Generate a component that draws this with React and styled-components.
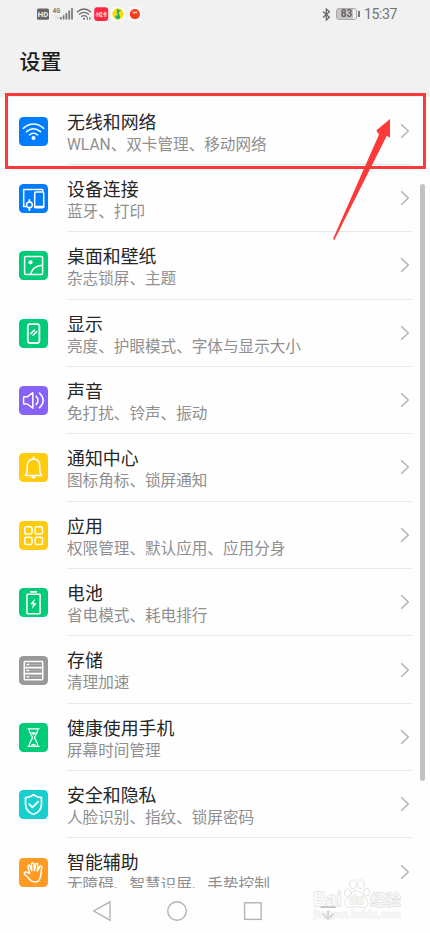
import React from "react";
import styled, { createGlobalStyle } from "styled-components";

const rows = [
  { icon: "wifi", bg: "#007dff", title: "无线和网络", sub: "WLAN、双卡管理、移动网络" },
  { icon: "devices", bg: "#007dff", title: "设备连接", sub: "蓝牙、打印" },
  { icon: "wallpaper", bg: "#00cb78", title: "桌面和壁纸", sub: "杂志锁屏、主题" },
  { icon: "display", bg: "#00cb78", title: "显示", sub: "亮度、护眼模式、字体与显示大小" },
  { icon: "sound", bg: "#8662f6", title: "声音", sub: "免打扰、铃声、振动" },
  { icon: "bell", bg: "#ffcb0d", title: "通知中心", sub: "图标角标、锁屏通知" },
  { icon: "apps", bg: "#ffcb0d", title: "应用", sub: "权限管理、默认应用、应用分身" },
  { icon: "battery", bg: "#00cb78", title: "电池", sub: "省电模式、耗电排行" },
  { icon: "storage", bg: "#999999", title: "存储", sub: "清理加速" },
  { icon: "hourglass", bg: "#00cb78", title: "健康使用手机", sub: "屏幕时间管理" },
  { icon: "shield", bg: "#17cfcf", title: "安全和隐私", sub: "人脸识别、指纹、锁屏密码" },
  { icon: "hand", bg: "#ff9a22", title: "智能辅助", sub: "无障碍、智慧识屏、手势控制" }
];

// All glyphs share the 29x29 tile as their coordinate system
const glyphs = {
  wifi: (
    <>
      <path d="M4.3 11.3Q14.5 2.8 24.7 11.3M7.5 14.7Q14.5 8.9 21.5 14.7M10.5 17.9Q14.5 14.6 18.5 17.9" />
      <circle cx="14.5" cy="21" r="2" fill="#fff" stroke="none" />
    </>
  ),
  devices: (
    <>
      <path d="M7 22.5H4.7V5.4H23.7V7.5" />
      <rect x="15.7" y="8.1" width="9" height="15.6" rx="1" />
      <path d="M16 22.9H24.4" strokeWidth="2.2" />
      <circle cx="10.4" cy="20.8" r="2.9" />
      <path d="M10.4 15.8V17.8M10.4 23.8V26" strokeWidth="1.8" />
    </>
  ),
  wallpaper: (
    <>
      <rect x="5.6" y="5.6" width="18" height="18" rx="1.3" />
      <circle cx="11.5" cy="11.3" r="2.1" fill="#fff" stroke="none" />
      <path d="M11.8 23.4C12.3 18 17.4 14.4 23.4 14.3" />
    </>
  ),
  display: (
    <>
      <rect x="8.8" y="5.2" width="11.6" height="18.8" rx="2.2" strokeWidth="1.8" />
      <path d="M11.7 14.7L15.4 11.1M14 16.2L17.7 12.6" />
    </>
  ),
  sound: (
    <>
      <path d="M4.6 11.4Q4.6 10.8 5.2 10.8H8.3L13.8 6.6V22.2L8.3 18H5.2Q4.6 18 4.6 17.4Z" />
      <path d="M17.2 10.2Q20.8 14.4 17.2 18.6M20.4 7Q28 14.4 20.4 21.8" />
    </>
  ),
  bell: (
    <>
      <path d="M6.3 22.5C8.4 20.8 8.2 17.5 8.2 13.4C8.2 8.8 10.7 6.1 14.5 6.1S20.8 8.8 20.8 13.4C20.8 17.5 20.6 20.8 22.7 22.5Z" />
      <path d="M14.5 4.4V6M13.2 24.2H15.8" strokeWidth="2" />
    </>
  ),
  apps: (
    <>
      <rect x="5.7" y="5.8" width="7.3" height="7.3" rx="1.6" />
      <rect x="16.2" y="5.8" width="7.3" height="7.3" rx="1.6" />
      <rect x="5.7" y="16.3" width="7.3" height="7.3" rx="1.6" />
      <rect x="16.2" y="16.3" width="7.3" height="7.3" rx="1.6" />
    </>
  ),
  battery: (
    <>
      <path d="M11.8 3.8H17.2" strokeWidth="1.8" />
      <rect x="7.9" y="6.2" width="13.2" height="19.6" rx="0.7" />
      <path d="M15.9 10.8L11.2 16.3H14L13 21L17.7 15.3H14.9Z" fill="#fff" stroke="none" />
    </>
  ),
  storage: (
    <>
      <rect x="5.3" y="5.5" width="18.4" height="18.2" rx="0.6" />
      <path d="M5.5 11.6H23.5M5.5 17.6H23.5" strokeWidth="1.8" />
      <path d="M8 8.5H9.6M8 14.6H9.6M8 20.7H9.6" strokeWidth="1.5" />
      <path d="M11.2 8.5H21.8M11.2 14.6H21.8M11.2 20.7H21.8" strokeWidth="0.4" opacity="0.6" />
    </>
  ),
  hourglass: (
    <>
      <path
        d="M9 5.8H20M9 23.4H20M10.2 5.8C10 11 13.4 12 13.4 14.6C13.4 17.2 10 18.2 10.2 23.4M18.8 5.8C19 11 15.6 12 15.6 14.6C15.6 17.2 19 18.2 18.8 23.4"
        strokeWidth="1.3"
      />
      <path d="M11.6 9.2H17.4L14.5 12.2ZM11.3 22.5Q14.5 19 17.7 22.5Z" fill="#fff" stroke="none" />
    </>
  ),
  shield: (
    <>
      <path d="M14.5 4.6Q17.7 7.5 22.5 7.6V14C22.5 19.5 19 22.8 14.5 24.5C10 22.8 6.5 19.5 6.5 14V7.6Q11.3 7.5 14.5 4.6Z" strokeWidth="1.7" />
      <path d="M10.3 14.2L13.4 17.3L19.2 11.6" strokeWidth="1.8" />
    </>
  ),
  hand: (
    <path
      d="M10.7 15.2L9 9.1C8.5 7.1 10.6 6.5 11.2 8.3L12.8 12.8L12.4 6.7C12.3 4.6 14.7 4.4 15 6.4L15.5 12.5L16.5 6.8C17 4.9 19.1 5.3 18.8 7.3L18.2 13L20.6 8.9C21.5 7.2 23.5 8.1 22.8 9.9C21.6 13.5 22.8 18 20.1 22.1Q18.8 24 16.4 24C12.5 24 10.8 22.3 8.8 19.4L5.7 16.3C4.4 14.6 6.3 13.2 8 14.2Z"
    />
  )
};

const Index = () => (
  <>
    <GlobalStyle />
    <Screen>
      <StatusBar>
        <StatusGroup>
          <StatusLeft />
        </StatusGroup>
        <StatusGroup>
          <Bluetooth width="9" height="13" viewBox="0 0 9 13">
            <path d="M1 3.5L7.4 9.2L4.3 12V1L7.4 3.8L1 9.5" />
          </Bluetooth>
          <BatteryBody>83</BatteryBody>
          <BatteryCap />
          <Clock>15:37</Clock>
        </StatusGroup>
      </StatusBar>
      <Header>设置</Header>
      <List>
        {rows.map(row => (
          <Row key={row.icon}>
            <Tile $bg={row.bg}>
              <Glyph viewBox="0 0 29 29">{glyphs[row.icon]}</Glyph>
            </Tile>
            <RowBody>
              <Texts>
                <Title>{row.title}</Title>
                <Sub>{row.sub}</Sub>
              </Texts>
              <Chevron viewBox="0 0 10 16">
                <path d="M1.2 1.2L8.2 8L1.2 14.8" />
              </Chevron>
            </RowBody>
          </Row>
        ))}
      </List>
      <NavBar>
        <NavIcon viewBox="0 0 22 22">
          <path d="M19 1.8V20.2L2.8 11Z" />
        </NavIcon>
        <NavIcon viewBox="0 0 22 22">
          <circle cx="11" cy="11" r="9.3" />
        </NavIcon>
        <NavIcon viewBox="0 0 22 22">
          <rect x="2.6" y="2.8" width="16.6" height="16.6" />
        </NavIcon>
        <NavIcon viewBox="0 0 22 22">
          <path d="M3.2 7H19M11.1 10.8V19M5.4 13.6L11.1 19L16.8 13.6" />
        </NavIcon>
      </NavBar>
      <ScrollThumb />
      <Highlight />
      <Pointer viewBox="0 0 60 124">
        <path d="M1 121L47 16.5L44.3 12.5L58 1V19.8L54.8 17.8L2.4 122Z" fill="#fc3a3a" />
      </Pointer>
      <Watermark />
    </Screen>
  </>
);

const StatusLeft = () => (
  <svg width="108" height="16" viewBox="0 0 108 16">
    <rect x="1" y="2.4" width="12" height="11.4" rx="1.5" fill="#666" />
    <text x="7" y="11" fontSize="7.6" fontWeight="700" textAnchor="middle" fill="#f1f1f1">HD</text>
    <text x="16.8" y="7" fontSize="7" fontWeight="700" fill="#777" textLength="7.4" lengthAdjust="spacingAndGlyphs">4G</text>
    <text x="17.4" y="13.4" fontSize="4.8" fill="#cfcfcf">1G</text>
    <path d="M24.8 11V13.6M27.6 9.2V13.6M30.4 7V13.6M33.2 4.6V13.6M36 2V13.6" stroke="#777" strokeWidth="1.7" />
    <g fill="none" stroke="#6d6d6d" strokeWidth="1.35">
      <path d="M41 6.2Q48 -0.2 55 6.2M43.1 8.6Q48 4.1 53 8.6M45.2 10.8Q48 8.4 50.8 10.8" />
    </g>
    <circle cx="48" cy="12.8" r="1" fill="#6d6d6d" />
    <path d="M50.3 12.4L52 10.6V14.2ZM55.2 12.4L53.4 10.6V14.2Z" fill="#777" />
    <rect x="58.2" y="1.2" width="14" height="13.8" rx="3" fill="#ff2745" />
    <text x="65.2" y="10" fontSize="4.4" fontWeight="700" textAnchor="middle" fill="#fff" textLength="11" lengthAdjust="spacingAndGlyphs">小红书</text>
    <rect x="75.2" y="1.2" width="13.6" height="13.8" rx="3" fill="#fbfbfb" />
    <circle cx="82" cy="8" r="5.7" fill="#ffdc08" />
    <path d="M81 2.7Q83 4.4 85.4 4.6L82.6 6.2L84.2 10.9Q83.9 13.4 81.3 13.2Q79 12.6 79.3 10.6Q80 8.7 82.1 9.4L80.6 5.9Z" fill="#12b573" />
    <rect x="92" y="1.2" width="13.6" height="13.8" rx="3" fill="#fbfbfb" />
    <circle cx="98.9" cy="8.2" r="5.1" fill="#f4411d" />
    <path d="M96.8 5.4L98.2 7.4L99 5.8L100.2 7.2L101 5.4" stroke="#ffd8c8" fill="none" />
  </svg>
);

const Watermark = () => (
  <Mark viewBox="0 0 94 48">
    <g fill="#fff" fillOpacity="0.8" stroke="#dfdfdf" strokeWidth="0.9">
      <ellipse cx="36.6" cy="16.7" rx="3.2" ry="3.8" />
      <ellipse cx="41.9" cy="8.2" rx="3.3" ry="4.3" />
      <ellipse cx="49.9" cy="8.2" rx="3.3" ry="4.3" />
      <ellipse cx="55.6" cy="16.2" rx="3.2" ry="3.8" />
      <path d="M45 14.6C40.5 14.6 40 19 36.5 21.6C31.8 25.4 33.6 31.4 39 31.4C41.8 31.4 43 30.6 45.5 30.6S50.5 31.4 52.3 31.4C57.8 31.4 58.4 25.4 54.3 22C51.2 19.2 49.8 14.6 45 14.6Z" />
    </g>
    <MarkText x="2" y="30" fontSize="20" textLength="29" lengthAdjust="spacingAndGlyphs">Bai</MarkText>
    <MarkText x="38" y="28.2" fontSize="12" textLength="14.5" lengthAdjust="spacingAndGlyphs">du</MarkText>
    <MarkText x="59.5" y="29" fontSize="15.2">经验</MarkText>
    <MarkText $faint x="2" y="42" fontSize="10" textLength="88" lengthAdjust="spacingAndGlyphs">jingyan.baidu.com</MarkText>
  </Mark>
);

const GlobalStyle = createGlobalStyle`
  * {
    box-sizing: border-box;
  }
  body {
    margin: 0;
    background: #fff;
    font-family: Roboto, "Noto Sans CJK SC", sans-serif;
  }
  svg {
    display: block;
    flex: none;
  }
`;

const Screen = styled.div`
  position: relative;
  display: flex;
  flex-direction: column;
  width: 430px;
  height: 933px;
  overflow: hidden;
  background: #fefefe;
`;

const StatusBar = styled.div`
  display: flex;
  flex: none;
  justify-content: space-between;
  height: 30px;
  padding: 6px 32px 0 36px;
  background: #f1f1f1;
`;

const StatusGroup = styled.div`
  display: flex;
  align-items: center;
  height: 16px;
`;

const Bluetooth = styled.svg`
  margin-right: 5px;
  fill: none;
  stroke: #686868;
  stroke-width: 1.3;
`;

const BatteryBody = styled.div`
  width: 21px;
  height: 12px;
  border: 1px solid #a9a9a9;
  border-radius: 3px;
  background: linear-gradient(90deg, #c6c6c6 82%, #f1f1f1 82%);
  color: #626262;
  font-size: 10px;
  font-weight: 700;
  line-height: 10.5px;
  text-align: center;
`;

const BatteryCap = styled.div`
  width: 1.5px;
  height: 6px;
  margin: 0 4.5px 0 1px;
  background: #777;
`;

const Clock = styled.span`
  width: 34px;
  color: #747474;
  font-size: 14.2px;
  line-height: 17px;
  letter-spacing: -0.45px;
  white-space: nowrap;
`;

const Header = styled.h1`
  flex: none;
  height: 67px;
  margin: 0;
  padding: 17px 19.5px 0;
  background: #f1f1f1;
  color: #1d1d1d;
  font-size: 21px;
  font-weight: 500;
  line-height: 30px;
`;

const List = styled.main`
  flex: none;
  height: 791px;
  padding-top: 0.6px;
  overflow: hidden;
`;

const Row = styled.div`
  display: flex;
  align-items: center;
  height: 67.35px;
  padding: 0 18px 0 19px;
`;

const Tile = styled.div`
  flex: none;
  width: 29px;
  height: 29px;
  border-radius: 4.5px;
  background: ${({ $bg }) => $bg};
`;

const Glyph = styled.svg`
  width: 29px;
  height: 29px;
  fill: none;
  stroke: #fff;
  stroke-width: 1.5;
  stroke-linejoin: round;
  stroke-linecap: round;
`;

const RowBody = styled.div`
  display: flex;
  flex: 1;
  align-items: center;
  justify-content: space-between;
  height: 100%;
  margin-left: 19px;
  padding-right: 2px;
  border-bottom: 1px solid #e7e7e7;
`;

const Texts = styled.div`
  display: flex;
  flex-direction: column;
  padding-top: 4.8px;
`;

const Title = styled.span`
  color: #262626;
  font-size: 17.9px;
  line-height: 23px;
`;

const Sub = styled.span`
  color: #8f8f8f;
  font-size: 15.6px;
  line-height: 22px;
`;

const Chevron = styled.svg`
  width: 10px;
  height: 16px;
  fill: none;
  stroke: #b5b5b5;
  stroke-width: 1.6;
`;

const NavBar = styled.nav`
  display: flex;
  flex: none;
  align-items: center;
  gap: 53.3px;
  height: 45px;
  padding-left: 91px;
`;

const NavIcon = styled.svg`
  width: 22px;
  height: 22px;
  fill: none;
  stroke: #b4b4b4;
  stroke-width: 1.4;
`;

const ScrollThumb = styled.div`
  position: absolute;
  top: 184px;
  left: 420px;
  width: 5px;
  height: 597px;
  border-radius: 3px;
  background: #c1c1c1;
`;

const Highlight = styled.div`
  position: absolute;
  top: 93px;
  left: 5px;
  width: 421px;
  height: 76px;
  border: 3px solid #fc3a3a;
`;

const Pointer = styled.svg`
  position: absolute;
  top: 118px;
  left: 332px;
  width: 60px;
  height: 124px;
`;

const Mark = styled.svg`
  position: absolute;
  top: 876px;
  left: 311px;
  width: 94px;
  height: 48px;
`;

/* outline painted under the fill keeps the small letters legible */
const MarkText = styled.text`
  fill: #fff;
  fill-opacity: ${({ $faint }) => ($faint ? 0.4 : 0.7)};
  stroke: #dfdfdf;
  stroke-opacity: ${({ $faint }) => ($faint ? 0.5 : 0.9)};
  stroke-width: ${({ $faint }) => ($faint ? 1 : 1.4)};
  stroke-linejoin: round;
  paint-order: stroke;
  font-family: "Liberation Sans", "Noto Sans CJK SC", sans-serif;
  font-weight: 700;
`;

export default Index;
